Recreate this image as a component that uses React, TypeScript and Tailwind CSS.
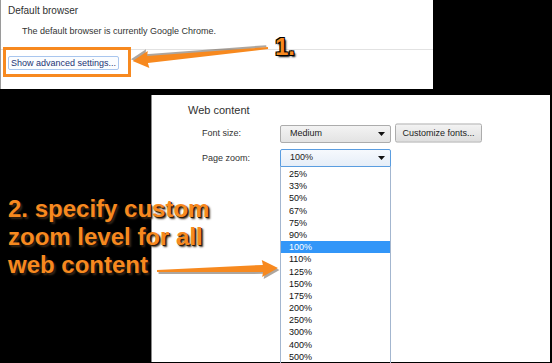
import React from 'react';

const zoomLevels = ['25%', '33%', '50%', '67%', '75%', '90%', '100%', '110%', '125%', '150%', '175%', '200%', '250%', '300%', '400%', '500%'];

function Caret() {
  return (
    <svg width="7" height="4" viewBox="0 0 7 4" className="shrink-0">
      <path d="M0 0h7L3.5 4z" fill="#111" />
    </svg>
  );
}

// tapered arrow drawn along +x, then placed with a transform
function Arrow({ x, y, angle, length }: { x: number; y: number; angle: number; length: number }) {
  const L = length;
  const pts = `0,-1 ${L - 15},-3.5 ${L - 16},-8.5 ${L},0 ${L - 16},8.5 ${L - 15},3.5 0,1`;
  return (
    <g transform={`translate(${x} ${y}) rotate(${angle})`}>
      <polygon points={pts} fill="#4a3a2a" opacity="0.45" transform="translate(1.5 2)" />
      <polygon points={pts} fill="#f7891f" />
    </g>
  );
}

export default function App() {
  return (
    <div className="relative w-[552px] h-[363px] overflow-hidden bg-black font-['Liberation_Sans',Arial,sans-serif]">
      {/* Default browser panel */}
      <div className="w-[433px] h-[89px] bg-white border-l border-[#9a9a9a] pl-[7px] pt-[4px]">
        <div className="text-[10px] leading-[14px] text-[#303030]">Default browser</div>
        <div className="mt-[7px] ml-[14px] text-[9px] leading-[12px] text-[#333]">
          The default browser is currently Google Chrome.
        </div>
        <div className="-ml-[7px] mt-[12px] h-px bg-[#e2e2e2]" />
        <button className="mt-[6px] flex h-[14px] items-center rounded-[2px] border border-[#a9c6ee] bg-[#fbfdff] px-[2px] text-[9px] leading-[12px] text-[#1e3474]">
          Show advanced settings...
        </button>
      </div>

      {/* Web content panel */}
      <div className="mt-[6px] ml-[151px] w-[399px] h-[267px] bg-white border-l border-[#8a8a8a] pt-[8px] pl-[36px]">
        <div className="text-[11px] leading-[14px] text-[#303030]">Web content</div>

        <div className="mt-[7px] flex items-center">
          <div className="w-[92px] pl-[14px] text-[9px] text-[#333]">Font size:</div>
          <div className="flex h-[18px] w-[111px] items-center justify-between rounded-[2px] border border-[#acacac] bg-gradient-to-b from-[#f3f3f3] to-[#e3e3e3] pl-[9px] pr-[5px] text-[9px] text-[#222]">
            <span>Medium</span>
            <Caret />
          </div>
          <div className="ml-[4px] flex h-[19px] w-[87px] -translate-y-[0.5px] items-center justify-center rounded-[2px] border border-[#acacac] bg-gradient-to-b from-[#f3f3f3] to-[#dedede] text-[9px] text-[#222]">
            Customize fonts...
          </div>
        </div>

        <div className="mt-[6px] flex items-start">
          <div className="w-[92px] pl-[14px] pt-[3px] text-[9px] text-[#333]">Page zoom:</div>
          <div className="flex w-[111px] flex-col">
            <div className="flex h-[18px] items-center justify-between rounded-t-[2px] border border-[#5a9de0] bg-gradient-to-b from-[#f6f9fd] to-[#e6eef8] pl-[9px] pr-[5px] text-[9px] text-[#222]">
              <span>100%</span>
              <Caret />
            </div>
            <div className="border-x border-[#a3b6cf] pt-[1px]">
              {zoomLevels.map((z) => (
                <div
                  key={z}
                  className={`h-[12.2px] pl-[8px] text-[9px] leading-[12.2px] ${
                    z === '100%' ? 'bg-[#3296f8] text-white' : 'text-[#111]'
                  }`}
                >
                  {z}
                </div>
              ))}
            </div>
          </div>
        </div>
      </div>

      {/* annotations */}
      <div className="absolute left-[3px] top-[47px] h-[30px] w-[128px] border-[3px] border-[#f7891f]" />

      <svg className="pointer-events-none absolute inset-0" width="552" height="363" viewBox="0 0 552 363">
        <Arrow x={268} y={48} angle={174.5} length={136} />
        <Arrow x={157} y={271} angle={-1.4} length={121} />
      </svg>

      <div className="absolute left-[275px] top-[33px] text-[24px] font-bold leading-[28px] text-[#f7891f] [text-shadow:-1px_-1px_0_#000,1px_-1px_0_#000,-1px_1px_0_#000,1px_1px_0_#000,2px_2px_2px_#000]">
        1.
      </div>
      <div className="absolute left-[8px] top-[195px] text-[24px] font-bold leading-[28px] text-[#f7891f] [text-shadow:1px_1px_0_#2a1a0a,2px_2px_2px_#3a2a1a]">
        2. specify custom
        <br />
        zoom level for all
        <br />
        web content
      </div>
    </div>
  );
}
